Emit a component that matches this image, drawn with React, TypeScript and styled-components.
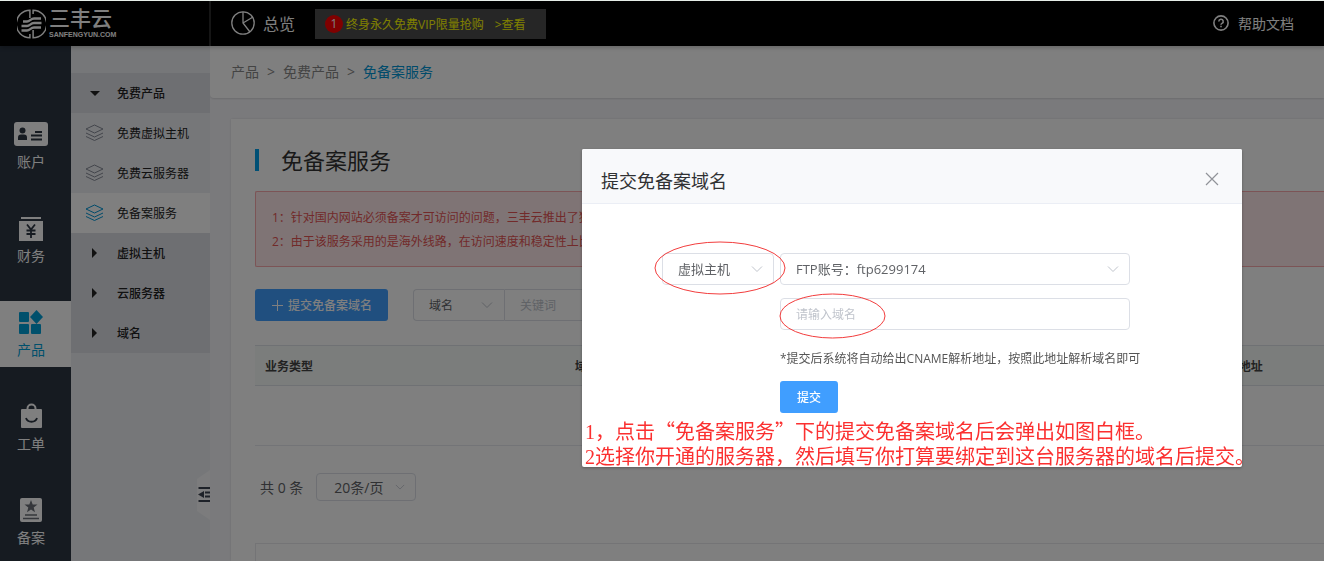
import React from "react";
import styled, { createGlobalStyle, css } from "styled-components";

const GlobalStyle = createGlobalStyle`
  *, *::before, *::after { box-sizing: border-box; }
  body {
    margin: 0;
    background: #f5f5f9;
    color: #333;
    font-family: "Open Sans", "Noto Sans CJK SC", sans-serif;
    font-size: 12px;
  }
  button, input, select { font-family: inherit; margin: 0; }
  a { color: inherit; text-decoration: none; }
  h1, h2, p, ul { margin: 0; padding: 0; font-weight: 400; list-style: none; }
`;

const Page = styled.div`
  display: flex;
  flex-direction: column;
  height: 100vh;
  overflow: hidden;
  border-top: 1px solid #e6ede8;
`;

/* ---------- Top bar ---------- */

const TopBar = styled.header`
  display: flex;
  align-items: center;
  flex: none;
  height: 45px;
  padding-right: 30px;
  background: #000;
  color: #fff;
  box-shadow: 0 2px 4px rgba(0, 0, 0, 0.2);
  z-index: 1;
`;

const Brand = styled.a`
  display: flex;
  align-items: center;
  gap: 3px;
  width: 211px;
  height: 45px;
  padding-left: 17px;
  border-right: 2px solid #2a2a2a;
`;

const BrandText = styled.span`
  display: flex;
  flex-direction: column;
  padding-bottom: 2px;
`;

const BrandName = styled.span`
  font-family: "Liberation Sans", "Noto Sans CJK SC", sans-serif;
  font-size: 21px;
  line-height: 24px;
  font-weight: 500;
`;

const BrandDomain = styled.span`
  font-family: "Liberation Sans", sans-serif;
  font-size: 7px;
  line-height: 8px;
  font-weight: 700;
`;

const Overview = styled.a`
  display: flex;
  align-items: center;
  gap: 8px;
  margin: 0 20px;
  padding-bottom: 2px;
  font-size: 16px;
`;

const Promo = styled.a`
  display: flex;
  align-items: center;
  height: 30px;
  padding: 0 20px 0 10px;
  background: #4c4c4c;
  color: #ff0;
  white-space: nowrap;
`;

const PromoCount = styled.span`
  display: grid;
  place-items: center;
  width: 18px;
  height: 18px;
  margin-right: 3px;
  border-radius: 50%;
  background: #f00;
  color: #fff;
  line-height: 18px;
`;

const PromoMore = styled.span`
  margin-left: 11px;
`;

const Help = styled.a`
  display: flex;
  align-items: center;
  gap: 9px;
  margin-left: auto;
  padding-bottom: 2px;
  font-size: 14px;
`;

/* ---------- Navigation ---------- */

const Body = styled.div`
  display: flex;
  flex: 1;
  min-height: 0;
`;

const Rail = styled.nav`
  display: flex;
  flex-direction: column;
  gap: 28px;
  flex: none;
  width: 71px;
  padding-top: 67px;
  background: #2c3643;
`;

const RailItem = styled.a<{ $active?: boolean }>`
  display: flex;
  flex-direction: column;
  align-items: center;
  flex: none;
  gap: 4px;
  height: 66px;
  padding: 7px 9px 0 0;
  font-size: 14px;
  line-height: 20px;
  color: ${(p) => (p.$active ? "#00a0d8" : "#fff")};
  background: ${(p) => (p.$active ? "#fff" : "transparent")};
`;

const SubMenu = styled.nav`
  position: relative;
  flex: none;
  width: 139px;
  padding-top: 27px;
  background: #edeff2;
`;

type RowKind = "group" | "item" | "current";

const SubRow = styled.a<{ $kind: RowKind }>`
  display: flex;
  align-items: center;
  height: 40px;
  padding-left: 14px;
  gap: 13px;
  color: #222;
  font-weight: ${(p) => (p.$kind === "group" ? 500 : 400)};
  background: ${(p) =>
    ({ group: "#dcdee5", item: "transparent", current: "#fff" })[p.$kind]};
`;

const SubIcon = styled.span`
  display: grid;
  place-items: center;
  width: 19px;
`;

const Collapse = styled.button`
  position: absolute;
  right: 0;
  top: 423px;
  width: 13px;
  height: 52px;
  padding: 0;
  border: 0;
  background: none;
`;

/* ---------- Content ---------- */

const Main = styled.main`
  display: flex;
  flex-direction: column;
  flex: 1;
  min-width: 0;
  background: #f5f5f9;
`;

const Crumbs = styled.div`
  display: flex;
  align-items: center;
  flex: none;
  gap: 8px;
  height: 52px;
  padding: 0 0 2px 21px;
  border-radius: 0 0 0 4px;
  background: #fff;
  color: #888;
  font-size: 14px;
  box-shadow: 0 1px 2px rgba(0, 0, 0, 0.12);
`;

const CurrentCrumb = styled.a`
  color: #0096d6;
`;

const Card = styled.section`
  display: flex;
  flex-direction: column;
  flex: 1;
  margin: 21px 0 0 21px;
  padding: 30px 0 0 24px;
  background: #fff;
  box-shadow: 0 0 2px rgba(0, 0, 0, 0.12);
`;

const Title = styled.h1`
  height: 22px;
  padding-left: 22px;
  border-left: 4px solid #00a0ea;
  font-size: 22px;
  line-height: 22px;
`;

const Notice = styled.div`
  margin-top: 20px;
  padding: 14px 16px 12px;
  border: 1px solid #f9a8ac;
  border-radius: 2px 0 0 2px;
  border-right: 0;
  background: #fee9ea;
  color: #e45454;
  line-height: 24px;
`;

const Tools = styled.div`
  display: flex;
  margin-top: 22px;
`;

const PrimaryButton = styled.button`
  display: flex;
  align-items: center;
  justify-content: center;
  gap: 5px;
  min-width: 58px;
  height: 32px;
  padding: 0 16px;
  border: 0;
  border-radius: 3px;
  background: #409eff;
  color: #fff;
  font-size: 12px;
  font-weight: 500;
`;

const fieldBox = css`
  width: 100%;
  border: 1px solid #dcdfe6;
  border-radius: 4px;
  background: #fff;
  color: #606266;
  outline: none;
`;

const SelectBox = styled.div<{ $width: number }>`
  display: grid;
  align-items: center;
  flex: none;
  width: ${(p) => p.$width}px;
  > * { grid-area: 1 / 1; }
  > svg { justify-self: end; margin-right: 11px; pointer-events: none; }
`;

const SelectField = styled.select<{ $size: number; $height: number; $pad: number }>`
  ${fieldBox}
  appearance: none;
  height: ${(p) => p.$height}px;
  padding: 0 0 0 ${(p) => p.$pad}px;
  font-size: ${(p) => p.$size}px;
`;

const TextField = styled.input`
  ${fieldBox}
  height: 32px;
  padding: 0 15px;
  font-size: 12px;
  &::placeholder { color: #c0c4cc; opacity: 1; }
`;

const SearchGroup = styled.div`
  display: flex;
  flex: none;
  width: 320px;
  margin-left: 25px;
  ${SelectField} { border-radius: 4px 0 0 4px; border-right: 0; }
  ${TextField} { border-radius: 0 4px 4px 0; }
`;

const Table = styled.table`
  width: 100%;
  margin-top: 24px;
  border-collapse: separate;
  border-spacing: 0;
  table-layout: fixed;
  th {
    height: 41px;
    padding: 0 10px;
    border: solid #dfe3e8;
    border-width: 1px 0;
    background: #f6faf8;
    color: #444;
    text-align: left;
    font-weight: 700;
    white-space: nowrap;
  }
  td {
    height: 60px;
    border-bottom: 1px solid #e6e8ee;
  }
`;

const WideCol = styled.col`
  width: 310px;
`;

const Pager = styled.div`
  display: flex;
  align-items: center;
  gap: 13px;
  margin-top: 27px;
  padding-left: 5px;
  color: #606266;
  font-size: 14px;
`;

const BottomPanel = styled.div`
  flex: 1;
  margin-top: 42px;
  border: solid #e8e8ec;
  border-width: 1px 0 0 1px;
`;

/* ---------- Dialog ---------- */

const Mask = styled.div`
  position: fixed;
  inset: 1px 0 0 0;
  z-index: 10;
  display: flex;
  justify-content: flex-end;
  align-items: flex-start;
  padding: 148px 82px 0 0;
  background: rgba(0, 0, 0, 0.5);
`;

const Dialog = styled.section`
  width: 660px;
  border-radius: 2px;
  background: #fff;
  box-shadow: 0 1px 3px rgba(0, 0, 0, 0.3);
`;

const DialogHead = styled.div`
  display: flex;
  align-items: center;
  justify-content: space-between;
  height: 55px;
  padding: 10px 22px 0 19px;
  border-bottom: 1px solid #ebeef5;
  border-radius: 2px 2px 0 0;
  background: #f8f9fb;
`;

const DialogTitle = styled.h2`
  font-size: 18px;
  line-height: 24px;
  color: #303133;
`;

const CloseButton = styled.button`
  display: grid;
  place-items: center;
  width: 16px;
  height: 16px;
  margin-bottom: 4px;
  padding: 0;
  border: 0;
  background: none;
`;

const Form = styled.form`
  position: relative;
  display: grid;
  grid-template-columns: 112px 350px;
  column-gap: 6px;
  padding: 49px 0 0 80px;
`;

const FormRest = styled.div`
  grid-column: 2;
  margin-top: 13px;
`;

const Hint = styled.p`
  margin: 19px 0 12px;
  color: #555;
  line-height: 20px;
  white-space: nowrap;
`;

const Marks = styled.svg`
  position: absolute;
  left: 0;
  top: 0;
  pointer-events: none;
`;

const Guide = styled.div`
  height: 54px;
  padding: 7px 0 0 3px;
  color: #fb3030;
  font-family: "Liberation Serif", "Noto Sans CJK SC", serif;
  font-size: 20px;
  font-weight: 300;
  line-height: 25px;
  white-space: nowrap;
`;

const WideQuote = styled.span`
  font-family: "Noto Sans CJK SC", sans-serif;
  line-height: 1;
`;

/* ---------- Icons ---------- */

const Chevron = ({ color = "#c0c4cc", size = 12 }: { color?: string; size?: number }) => (
  <svg width={size} height={size} viewBox="0 0 12 12" fill="none" stroke={color}>
    <path d="M1 3.5 6 8.5 11 3.5" />
  </svg>
);

const Logo = () => (
  <svg width="29" height="30" viewBox="0 0 29 30" fill="none" stroke="#fff">
    <path d="M12.900 9V1.300A13.700 13.700 0 0 0 12.900 28.700V25" strokeWidth="1.500" />
    <path d="M16.100 5V1.300A13.700 13.700 0 0 1 16.100 28.700V21" strokeWidth="1.500" />
    <path
      d="M6 12.500h4c3 0 3.500-3 7-3h7M4.500 17h5.500c3 0 3.500-3 7-3h7.500M4.500 21.500h5.500c3 0 3.500-3 7-3h7"
      strokeWidth="2.400"
    />
  </svg>
);

const PieIcon = () => (
  <svg width="24" height="24" viewBox="0 0 24 24" fill="none" stroke="#fff" strokeWidth="1.300">
    <circle cx="12" cy="12" r="11.200" />
    <path d="M12 .8V12l7 9M12 12l10-6" />
  </svg>
);

const HelpIcon = () => (
  <svg width="16" height="16" viewBox="0 0 16 16" fill="none" stroke="#fff" strokeWidth="1.600">
    <circle cx="8" cy="8" r="7.100" />
    <path d="M5.800 6.400a2.200 2.200 0 1 1 3.200 2C8.300 8.800 8 9.100 8 9.800M8 10.800v1.400" />
  </svg>
);

const AccountIcon = () => (
  <svg width="34" height="28" viewBox="0 0 34 28">
    <rect y="2" width="34" height="24" rx="3" fill="#fff" />
    <g fill="#2c3643">
      <circle cx="8.500" cy="10.500" r="3" />
      <path d="M4 20v-2.500q0-3 3-3h3q3 0 3 3V20z" />
    </g>
    <path d="M21 12h7M17 15.500h11M17 19.500h11" stroke="#2c3643" strokeWidth="1.800" />
  </svg>
);

const FinanceIcon = () => (
  <svg width="26" height="28" viewBox="0 0 26 28">
    <path d="M3 3h20v2H3zM1 7h24v20H1z" fill="#fff" />
    <path d="m9 10.500 4 5 4-5M13 15.500V24M8.500 16.500h9M8.500 20h9" stroke="#2c3643" strokeWidth="1.800" fill="none" />
  </svg>
);

const ProductIcon = () => (
  <svg width="26" height="28" viewBox="0 0 26 28" fill="#00a0d8">
    <rect x="1" y="4" width="10" height="10" rx="1" />
    <rect x="1" y="16" width="10" height="10" rx="1" />
    <rect x="13" y="16" width="10" height="10" rx="1" />
    <path d="m18.500 2 6.500 7-6.500 7-6.500-7z" />
  </svg>
);

const TicketIcon = () => (
  <svg width="24" height="28" viewBox="0 0 24 28" fill="none">
    <rect x="2" y="7" width="21" height="19" rx="1" fill="#fff" />
    <path d="M8.500 8V6.500a4 4 0 0 1 8 0V8" stroke="#fff" strokeWidth="2" />
    <path d="M7 16c1.500 5 9.500 5 11 0" stroke="#2c3643" strokeWidth="1.800" />
  </svg>
);

const RecordIcon = () => (
  <svg width="24" height="28" viewBox="0 0 24 28">
    <rect x="1" y="2" width="22" height="24" rx="2" fill="#fff" />
    <path
      d="m12 4 1.700 4.400 4.800.2-3.800 3 1.300 4.600-4-2.600-4 2.600 1.300-4.600-3.800-3 4.800-.2z"
      fill="#6a6f76"
    />
    <path d="M6 19h12M4 22.500h16" stroke="#6a6f76" strokeWidth="1.600" />
  </svg>
);

const LayersIcon = ({ color }: { color: string }) => (
  <svg width="19" height="18" viewBox="0 0 19 18" fill="none" stroke={color}>
    <path d="M9.500 1 18 5 9.500 9 1 5zM1 9l8.500 4L18 9M1 12.500l8.500 4 8.500-4" />
  </svg>
);

const Caret = ({ open }: { open?: boolean }) => (
  <svg width="10" height="10" viewBox="0 0 10 10" fill="#222">
    <path d={open ? "M0 3h10L5 8z" : "M2 0v10l5-5z"} />
  </svg>
);

const CollapseIcon = () => (
  <svg width="13" height="52" viewBox="0 0 13 52">
    <path d="M13 1 0 10v32l13 9z" fill="#f8f8fa" />
    <path d="M1.500 19H13M8 23.500h5M8 27.500h5M1.500 32H13" stroke="#3d4452" strokeWidth="1.800" />
    <path d="M1 25.500 7 22v7z" fill="#3d4452" />
  </svg>
);

const PlusIcon = () => (
  <svg width="12" height="12" viewBox="0 0 12 12" stroke="#fff">
    <path d="M6.500 1v11M1 6.500h11" />
  </svg>
);

const CloseIcon = () => (
  <svg width="14" height="14" viewBox="0 0 14 14" stroke="#909399" strokeWidth="1.200">
    <path d="M1 1l12 12M13 1 1 13" />
  </svg>
);

/* ---------- Page ---------- */

const railItems = [
  { label: "账户", icon: <AccountIcon /> },
  { label: "财务", icon: <FinanceIcon /> },
  { label: "产品", icon: <ProductIcon />, active: true },
  { label: "工单", icon: <TicketIcon /> },
  { label: "备案", icon: <RecordIcon /> },
];

const subRows: { label: string; kind: RowKind; open?: boolean }[] = [
  { label: "免费产品", kind: "group", open: true },
  { label: "免费虚拟主机", kind: "item" },
  { label: "免费云服务器", kind: "item" },
  { label: "免备案服务", kind: "current" },
  { label: "虚拟主机", kind: "group" },
  { label: "云服务器", kind: "group" },
  { label: "域名", kind: "group" },
];

interface PickerProps {
  label: string;
  value: string;
  width: number;
  size?: number;
  height?: number;
  pad?: number;
}

const Picker = ({ label, value, width, size = 13, height = 32, pad = 15 }: PickerProps) => (
  <SelectBox $width={width}>
    <SelectField aria-label={label} $size={size} $height={height} $pad={pad}>
      <option>{value}</option>
    </SelectField>
    <Chevron size={height < 32 ? 10 : 12} />
  </SelectBox>
);

export default function App() {
  return (
    <>
      <GlobalStyle />
      <Page>
        <TopBar>
          <Brand href="#">
            <Logo />
            <BrandText>
              <BrandName>三丰云</BrandName>
              <BrandDomain>SANFENGYUN.COM</BrandDomain>
            </BrandText>
          </Brand>
          <Overview href="#">
            <PieIcon />
            总览
          </Overview>
          <Promo href="#">
            <PromoCount>1</PromoCount>
            终身永久免费VIP限量抢购
            <PromoMore>&gt;查看</PromoMore>
          </Promo>
          <Help href="#">
            <HelpIcon />
            帮助文档
          </Help>
        </TopBar>
        <Body>
          <Rail>
            {railItems.map((item) => (
              <RailItem key={item.label} href="#" $active={item.active}>
                {item.icon}
                {item.label}
              </RailItem>
            ))}
          </Rail>
          <SubMenu>
            {subRows.map((row) => (
              <SubRow key={row.label} href="#" $kind={row.kind}>
                <SubIcon>
                  {row.kind === "group" ? (
                    <Caret open={row.open} />
                  ) : (
                    <LayersIcon color={row.kind === "current" ? "#0096d6" : "#868b98"} />
                  )}
                </SubIcon>
                {row.label}
              </SubRow>
            ))}
            <Collapse type="button" aria-label="收起菜单">
              <CollapseIcon />
            </Collapse>
          </SubMenu>
          <Main>
            <Crumbs>
              <a href="#">产品</a>
              <span>&gt;</span>
              <a href="#">免费产品</a>
              <span>&gt;</span>
              <CurrentCrumb href="#">免备案服务</CurrentCrumb>
            </Crumbs>
            <Card>
              <Title>免备案服务</Title>
              <Notice>
                <p>1：针对国内网站必须备案才可访问的问题，三丰云推出了独</p>
                <p>2：由于该服务采用的是海外线路，在访问速度和稳定性上比</p>
              </Notice>
              <Tools>
                <PrimaryButton type="button">
                  <PlusIcon />
                  提交免备案域名
                </PrimaryButton>
                <SearchGroup>
                  <Picker label="搜索类型" value="域名" width={91} size={12} />
                  <TextField aria-label="关键词" placeholder="关键词" />
                </SearchGroup>
              </Tools>
              <Table>
                <colgroup>
                  <WideCol />
                  <WideCol />
                  <WideCol />
                  <col />
                </colgroup>
                <thead>
                  <tr>
                    <th>业务类型</th>
                    <th>域名</th>
                    <th />
                    <th>CNAME地址</th>
                  </tr>
                </thead>
                <tbody>
                  <tr>
                    <td colSpan={4} />
                  </tr>
                </tbody>
              </Table>
              <Pager>
                <span>共 0 条</span>
                <Picker label="每页条数" value="20条/页" width={100} size={14} height={28} pad={17} />
              </Pager>
              <BottomPanel />
            </Card>
          </Main>
        </Body>
      </Page>
      <Mask>
        <Dialog role="dialog" aria-labelledby="dialog-title">
          <DialogHead>
            <DialogTitle id="dialog-title">提交免备案域名</DialogTitle>
            <CloseButton type="button" aria-label="关闭">
              <CloseIcon />
            </CloseButton>
          </DialogHead>
          <Form>
            <Picker label="产品类型" value="虚拟主机" width={112} />
            <Picker label="FTP账号" value="FTP账号：ftp6299174" width={350} />
            <FormRest>
              <TextField aria-label="域名" placeholder="请输入域名" />
              <Hint>*提交后系统将自动给出CNAME解析地址，按照此地址解析域名即可</Hint>
              <PrimaryButton type="button">提交</PrimaryButton>
            </FormRest>
            <Marks width="320" height="150" fill="none" stroke="#f23c3c">
              <ellipse cx="138" cy="64" rx="65" ry="26" />
              <ellipse cx="250.500" cy="112" rx="52.500" ry="22" />
            </Marks>
          </Form>
          <Guide>
            <p>
              1，点击<WideQuote>“</WideQuote>免备案服务<WideQuote>”</WideQuote>
              下的提交免备案域名后会弹出如图白框。
            </p>
            <p>2选择你开通的服务器，然后填写你打算要绑定到这台服务器的域名后提交。</p>
          </Guide>
        </Dialog>
      </Mask>
    </>
  );
}
